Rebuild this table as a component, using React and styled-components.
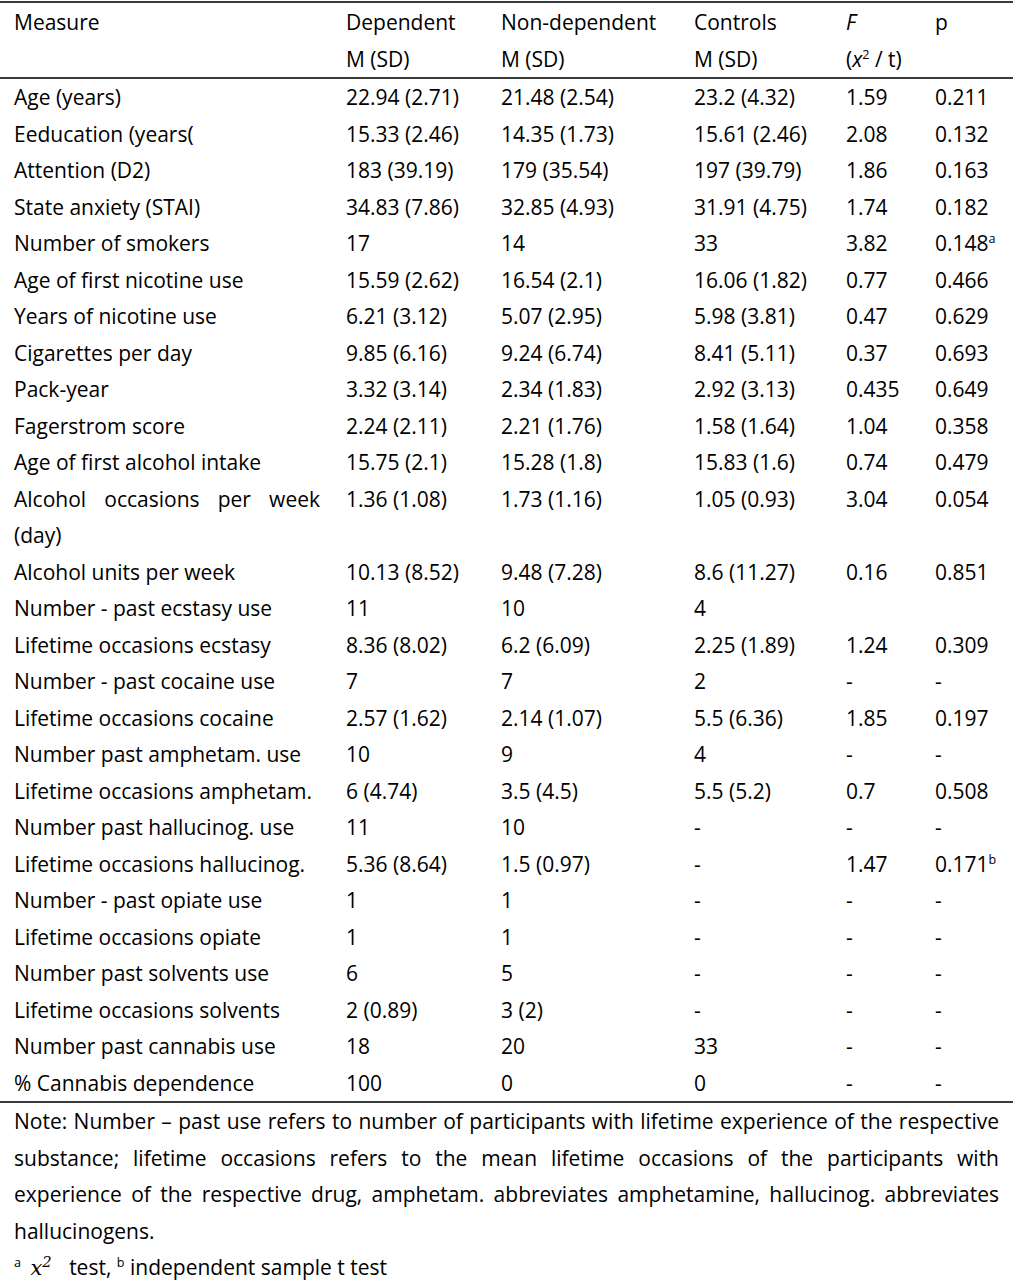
import React from "react"
import styled, { createGlobalStyle } from "styled-components"

const rows = [
  ["Age (years)", "22.94 (2.71)", "21.48 (2.54)", "23.2 (4.32)", "1.59", "0.211"],
  ["Eeducation (years(", "15.33 (2.46)", "14.35 (1.73)", "15.61 (2.46)", "2.08", "0.132"],
  ["Attention (D2)", "183 (39.19)", "179 (35.54)", "197 (39.79)", "1.86", "0.163"],
  ["State anxiety (STAI)", "34.83 (7.86)", "32.85 (4.93)", "31.91 (4.75)", "1.74", "0.182"],
  ["Number of smokers", "17", "14", "33", "3.82", "0.148", "a"],
  ["Age of first nicotine use", "15.59 (2.62)", "16.54 (2.1)", "16.06 (1.82)", "0.77", "0.466"],
  ["Years of nicotine use", "6.21 (3.12)", "5.07 (2.95)", "5.98 (3.81)", "0.47", "0.629"],
  ["Cigarettes per day", "9.85 (6.16)", "9.24 (6.74)", "8.41 (5.11)", "0.37", "0.693"],
  ["Pack-year", "3.32 (3.14)", "2.34 (1.83)", "2.92 (3.13)", "0.435", "0.649"],
  ["Fagerstrom score", "2.24 (2.11)", "2.21 (1.76)", "1.58 (1.64)", "1.04", "0.358"],
  ["Age of first alcohol intake", "15.75 (2.1)", "15.28 (1.8)", "15.83 (1.6)", "0.74", "0.479"],
  ["Alcohol occasions per week (day)", "1.36 (1.08)", "1.73 (1.16)", "1.05 (0.93)", "3.04", "0.054"],
  ["Alcohol units per week", "10.13 (8.52)", "9.48 (7.28)", "8.6 (11.27)", "0.16", "0.851"],
  ["Number - past ecstasy use", "11", "10", "4", "", ""],
  ["Lifetime occasions ecstasy", "8.36 (8.02)", "6.2 (6.09)", "2.25 (1.89)", "1.24", "0.309"],
  ["Number - past cocaine use", "7", "7", "2", "-", "-"],
  ["Lifetime occasions cocaine", "2.57 (1.62)", "2.14 (1.07)", "5.5 (6.36)", "1.85", "0.197"],
  ["Number past amphetam. use", "10", "9", "4", "-", "-"],
  ["Lifetime occasions amphetam.", "6 (4.74)", "3.5 (4.5)", "5.5 (5.2)", "0.7", "0.508"],
  ["Number past hallucinog. use", "11", "10", "-", "-", "-"],
  ["Lifetime occasions hallucinog.", "5.36 (8.64)", "1.5 (0.97)", "-", "1.47", "0.171", "b"],
  ["Number - past opiate use", "1", "1", "-", "-", "-"],
  ["Lifetime occasions opiate", "1", "1", "-", "-", "-"],
  ["Number past solvents use", "6", "5", "-", "-", "-"],
  ["Lifetime occasions solvents", "2 (0.89)", "3 (2)", "-", "-", "-"],
  ["Number past cannabis use", "18", "20", "33", "-", "-"],
  ["% Cannabis dependence", "100", "0", "0", "-", "-"],
]

export default function App() {
  return (
    <>
      <GlobalStyle />
      <Table>
        <colgroup>
          <col style={{ width: 332 }} />
          <col style={{ width: 155 }} />
          <col style={{ width: 193 }} />
          <col style={{ width: 152 }} />
          <col style={{ width: 89 }} />
          <col />
        </colgroup>
        <thead>
          <tr>
            <HeadCell>Measure</HeadCell>
            <HeadCell>Dependent<br />M (SD)</HeadCell>
            <HeadCell>Non-dependent<br />M (SD)</HeadCell>
            <HeadCell>Controls<br />M (SD)</HeadCell>
            <HeadCell>
              <em>F</em>
              <br />
              (<em>x</em><Sup>2</Sup> / t)
            </HeadCell>
            <HeadCell>p</HeadCell>
          </tr>
        </thead>
        <tbody>
          {rows.map(([label, dep, non, ctl, f, p, mark]) => (
            <tr key={label}>
              <Label>{label}</Label>
              <Cell>{dep}</Cell>
              <Cell>{non}</Cell>
              <Cell>{ctl}</Cell>
              <Cell>{f}</Cell>
              <Cell>
                {p}
                {mark && <Sup>{mark}</Sup>}
              </Cell>
            </tr>
          ))}
        </tbody>
      </Table>
      <Note>
        Note: Number – past use refers to number of participants with lifetime
        experience of the respective substance; lifetime occasions refers to the
        mean lifetime occasions of the participants with experience of the
        respective drug, amphetam. abbreviates amphetamine, hallucinog.
        abbreviates hallucinogens.
      </Note>
      <Footnote>
        <Sup>a</Sup> <Chi>x<sup>2</sup></Chi> test, <Sup>b</Sup> independent
        sample t test
      </Footnote>
    </>
  )
}

const GlobalStyle = createGlobalStyle`
  body {
    margin: 0;
    background: #fff;
    color: #000;
    font-family: "Open Sans", "Noto Sans", sans-serif;
    font-size: 21px;
  }
`
const Table = styled.table`
  width: 1013px;
  border-collapse: collapse;
  table-layout: fixed;
  border-top: 2.5px solid #3a3a3a;
  border-bottom: 2.5px solid #3a3a3a;
  margin-top: 1px;

  thead {
    border-bottom: 2.5px solid #3a3a3a;
  }
`
const HeadCell = styled.th`
  font-weight: 400;
  text-align: left;
  vertical-align: top;
  line-height: 36.5px;
  padding: 1px 0 0 14px;
`
const Cell = styled.td`
  vertical-align: top;
  line-height: 36.5px;
  padding: 0 0 0 14px;
  white-space: nowrap;
`
const Label = styled.td`
  vertical-align: top;
  line-height: 36.5px;
  padding: 0 12px 0 14px;
  text-align: justify;
`
const Sup = styled.sup`
  font-size: 0.6em;
  line-height: 0;
`
const Note = styled.p`
  margin: 0;
  padding: 0 14px;
  line-height: 36.5px;
  text-align: justify;
`
const Footnote = styled.p`
  margin: 0;
  padding: 0 14px;
  line-height: 36.5px;
`
const Chi = styled.span`
  font-family: "DejaVu Serif", "Liberation Serif", serif;
  font-style: italic;
  margin: 0 12px 0 4px;

  sup {
    font-size: 0.7em;
    line-height: 0;
  }
`
